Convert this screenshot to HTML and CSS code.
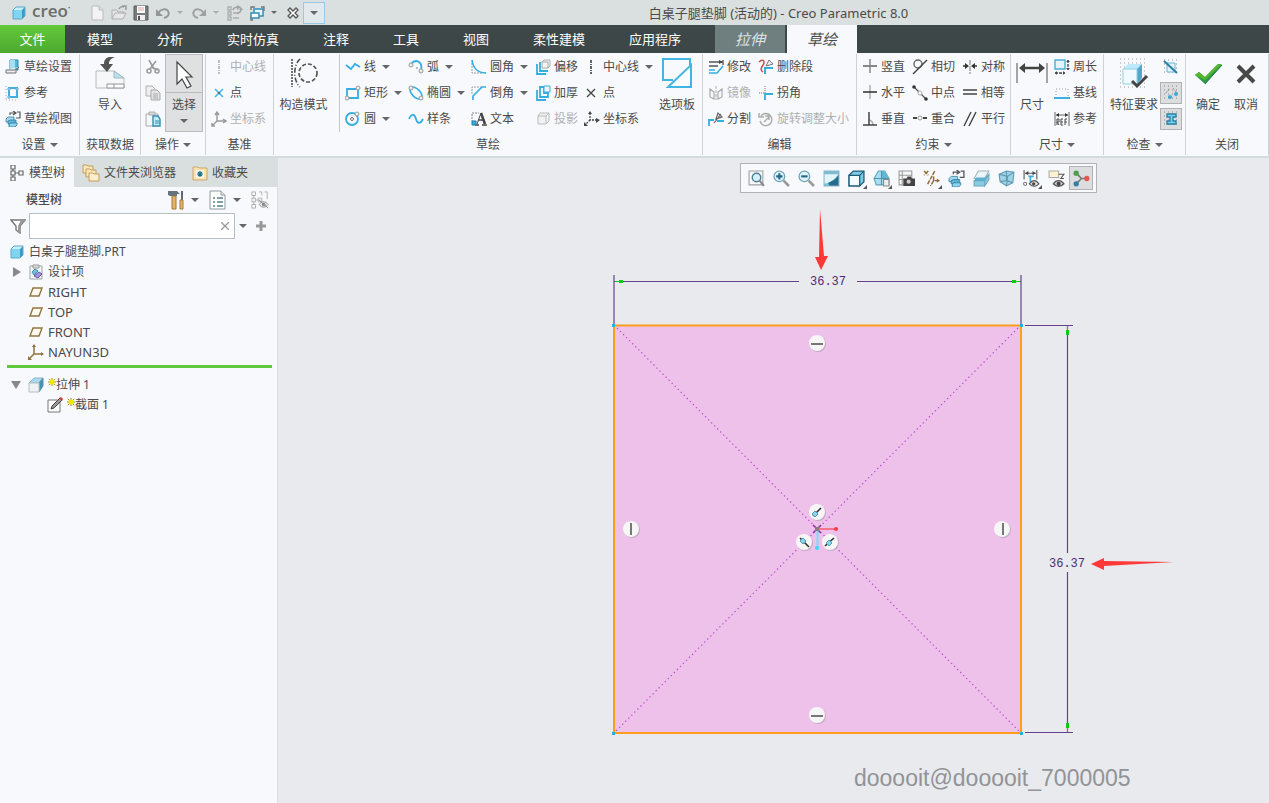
FILE: index.html
```
<!DOCTYPE html>
<html lang="zh-CN">
<head>
    <meta charset="UTF-8">
    <meta name="viewport" content="width=device-width, initial-scale=1.0">
    <title>白桌子腿垫脚 (活动的) - Creo Parametric 8.0</title>
    <link rel="stylesheet" href="styles.css">
</head>
<body>

    <!-- shared icons -->
    <svg class="sprite" aria-hidden="true">
        <symbol id="cube" viewBox="0 0 16 16">
            <path d="M2 5l3-3h9l-3 3z" fill="#c9eefb"/>
            <path d="M11 5l3-3v9l-3 3z" fill="#3a9cc4"/>
            <path d="M2 5h9v9H2z" fill="#80d4f2"/>
            <path d="M2 5l3-3h9v9l-3 3H2z" fill="none" stroke="#5aa9c8"/>
        </symbol>
        <symbol id="sketch-view" viewBox="0 0 16 16">
            <path d="M5 4V2h5M8 0l3 2-3 2M12 1h3v6h-4" fill="none" stroke="#555" stroke-width="1.2"/>
            <path d="M1 8l2-2h6v3l-2 2H1z" fill="#a5d8ec" stroke="#3487a8" stroke-width=".8"/>
            <path d="M3 10l2-1h6v3l-2 1H3z" fill="#5fb4d6" stroke="#2f7d9e" stroke-width=".8"/>
            <path d="M4 13l2-1h6v2l-2 2H4z" fill="#8fd3ec" stroke="#2f7d9e" stroke-width=".8"/>
        </symbol>
        <symbol id="spark" viewBox="0 0 10 10">
            <path d="M1 1l8 8M9 1L1 9M5 0v10M0 5h10" stroke="#77760c"/>
            <path d="M2 2h6v6H2z" fill="#f2e600"/>
        </symbol>
        <symbol id="plane" viewBox="0 0 16 16">
            <path d="M5 4h9l-3 8H2z" fill="#fdfaf2" stroke="#93733c" stroke-width="1.4"/>
        </symbol>
    </svg>

    <header class="titlebar">
        <div class="brand">
            <svg class="icon"><use href="#cube"/></svg>
            <span>creo<sup>•</sup></span>
        </div>
        <nav class="quick" aria-label="快速访问">
            <button aria-label="新建"><svg class="icon" viewBox="0 0 16 16"><path d="M3 1h7l4 4v10H3z" fill="#f3f3f3" stroke="#bbb"/><path d="M10 1v4h4" fill="#ddd" stroke="#bbb"/></svg></button>
            <button aria-label="打开"><svg class="icon" viewBox="0 0 16 16"><path d="M1 14V5h5l1 2h6v2M1 14l3-6h11l-3 6z" fill="#e6e7e7" stroke="#aeb1b1"/><path d="M8 4c1-2 3-3 5-2M11 1h4v4" fill="none" stroke="#999" stroke-width="1.5"/></svg></button>
            <button aria-label="保存"><svg class="icon" viewBox="0 0 16 16"><path d="M1 1h14v14H1z" fill="#777b7d" stroke="#595c5e"/><path d="M4 1h8v7H4z" fill="#fff"/><path d="M5 3h6M5 5h6" stroke="#d9a0a0"/><path d="M4 10h8v5H4z" fill="#eee"/><path d="M5 11h2v4H5z" fill="#555"/></svg></button>
            <button aria-label="撤消"><svg class="icon" viewBox="0 0 16 16"><path d="M3 8c3-4 8-5 10-2 2 3 0 6-4 7" fill="none" stroke="#929697" stroke-width="2"/><path d="M1 4v7h7z" fill="#929697"/></svg></button>
            <i class="caret dim"></i>
            <button aria-label="重做"><svg class="icon" viewBox="0 0 16 16"><path d="M13 8C10 4 5 3 3 6c-2 3 0 6 4 7" fill="none" stroke="#9da1a2" stroke-width="2"/><path d="M15 4v7H8z" fill="#9da1a2"/></svg></button>
            <i class="caret dim"></i>
            <button aria-label="重新生成"><svg class="icon" viewBox="0 0 16 16"><path d="M1 2h3v3H1zM1 7h3v3H1zM1 12h3v3H1zM6 8h6M6 13h6" fill="none" stroke="#aaaead" stroke-width="1.3"/><path d="M6 5c1-3 3-3 5-3M14 4c0 3-2 4-4 4" fill="none" stroke="#a0a4a3" stroke-width="1.6"/><path d="M10 0l4 2-4 3zM16 5h-4l2-3z" fill="#a0a4a3"/></svg></button>
            <button aria-label="窗口"><svg class="icon" viewBox="0 0 16 16"><path d="M2 5V2h4M12 2h3v4M4 15H2v-3" fill="none" stroke="#6c7475" stroke-width="1.3"/><path d="M5 4h9v7H5z" fill="#e9f7fc" stroke="#338eb3" stroke-width="1.5"/><path d="M2 8h8v5H2z" fill="#fff" stroke="#338eb3" stroke-width="1.5"/></svg></button>
            <i class="caret"></i>
            <button aria-label="关闭窗口"><svg class="icon" viewBox="0 0 16 16"><path d="M3 5l2-2 3 3 3-3 2 2-3 3 3 3-2 2-3-3-3 3-2-2 3-3z" fill="#fff" stroke="#555" stroke-width="1.3"/></svg></button>
            <button class="customize" aria-label="自定义"><i class="caret"></i></button>
        </nav>
        <h1>白桌子腿垫脚 (活动的) - Creo Parametric 8.0</h1>
    </header>

    <nav class="tabs">
        <button class="file">文件</button>
        <button>模型</button>
        <button>分析</button>
        <button>实时仿真</button>
        <button>注释</button>
        <button>工具</button>
        <button>视图</button>
        <button>柔性建模</button>
        <button>应用程序</button>
        <button class="context">拉伸</button>
        <button class="context active">草绘</button>
    </nav>

    <div class="ribbon">
        <section class="group">
            <div class="cmds setup">
                <button class="cmd"><svg class="icon" viewBox="0 0 16 16"><path d="M5 1h8v10H5z" fill="#55b8dd" stroke="#3383a3"/><path d="M5 1h5v9H5z" fill="#a4dff3"/><path d="M1 11h9l4-3M1 11v3h10V9" fill="#eee" stroke="#6c7273"/></svg>草绘设置</button>
                <button class="cmd"><svg class="icon" viewBox="0 0 16 16"><path d="M4 3h8v9H4z" fill="none" stroke="#42aedd" stroke-width="2"/><path d="M3 3h2v2H3zM11 3h2v2h-2zM3 11h2v2H3z" fill="#fff" stroke="#42aedd"/><path d="M1 1v14M1 15h12" stroke="#aaa" stroke-dasharray="1 2"/></svg>参考</button>
                <button class="cmd"><svg class="icon"><use href="#sketch-view"/></svg>草绘视图</button>
            </div>
            <button class="label">设置<i class="caret"></i></button>
        </section>

        <section class="group">
            <div class="cmds">
                <button class="big"><svg viewBox="0 0 32 32"><path d="M2 14h18l10 7v10H2z" fill="#f5f7f8" stroke="#b7bcbf"/><path d="M20 14v7h10z" fill="#bcdff0" stroke="#9ebac6"/><path d="M13 27h17v4H13zM20 27v4" fill="#fff" stroke="#8e9699"/><path d="M21 0c-8-1-11 2-11 7H6l7 8 6-8h-4c0-3 1-5 6-7z" fill="#555"/></svg>导入</button>
            </div>
            <div class="label">获取数据</div>
        </section>

        <section class="group">
            <div class="cmds ops">
                <button aria-label="剪切"><svg class="icon" viewBox="0 0 16 16"><path d="M4 1l5 9M11 2L5 10M6 8l7 3" stroke="#9a9a9a" stroke-width="1.6"/><circle cx="4" cy="12" r="2" fill="none" stroke="#9a9a9a" stroke-width="1.5"/><circle cx="12" cy="12" r="2" fill="none" stroke="#9a9a9a" stroke-width="1.5"/></svg></button>
                <button aria-label="复制"><svg class="icon" viewBox="0 0 16 16"><path d="M1 1h6l3 3v7H1z" fill="#eee" stroke="#b1b1b1"/><path d="M6 5h6l3 3v7H6z" fill="#e4e4e4" stroke="#a9a9a9"/><path d="M8 9h5M8 11h5M8 13h5" stroke="#aaa"/></svg></button>
                <button aria-label="粘贴"><svg class="icon" viewBox="0 0 16 16"><path d="M1 3h12v12H1z" fill="#f6f6f6" stroke="#aaa"/><path d="M4 1h6v3H4z" fill="#ddd" stroke="#aaa"/><path d="M8 5h5l2 3v7H8z" fill="#c3eaf8" stroke="#348eaf" stroke-width="1.4"/><path d="M10 10h4M10 12h4" stroke="#348eaf"/></svg></button>
                <button class="select"><svg viewBox="0 0 28 37"><path d="M7 7v22l5-5 5 9 4-2-5-9h6z" fill="#fff" stroke="#444" stroke-width="1.2"/></svg><span>选择</span><i class="caret"></i></button>
            </div>
            <button class="label">操作<i class="caret"></i></button>
        </section>

        <section class="group">
            <div class="cmds setup">
                <button class="cmd" disabled><svg class="icon" viewBox="0 0 16 16"><path d="M8 1v14" stroke="#aaa" stroke-width="1.5" stroke-dasharray="3 1 1 1"/></svg>中心线</button>
                <button class="cmd"><svg class="icon" viewBox="0 0 16 16"><path d="M4 4l8 8M12 4l-8 8" stroke="#43b5e3" stroke-width="1.6"/><circle cx="8" cy="8" r="1" fill="#555"/></svg>点</button>
                <button class="cmd" disabled><svg class="icon" viewBox="0 0 16 16"><path d="M6 2v8h8M6 10l-5 5M4 4l2-3 2 3M12 8l3 2-3 2M1 12v3h3" fill="none" stroke="#999" stroke-width="1.4"/></svg>坐标系</button>
            </div>
            <div class="label">基准</div>
        </section>

        <section class="group">
            <div class="cmds sketch">
                <button class="big construct"><svg viewBox="0 0 32 32"><path d="M4 2v28" stroke="#444" stroke-width="1.5" stroke-dasharray="2 1"/><path d="M12 2C5 8 5 24 12 30" fill="none" stroke="#444" stroke-width="1.5" stroke-dasharray="5 2 1 2"/><circle cx="20" cy="16" r="9" fill="none" stroke="#555" stroke-width="1.7" stroke-dasharray="4 2"/></svg>构造模式</button>
                <div class="cols">
                    <button class="cmd"><svg class="icon" viewBox="0 0 16 16"><path d="M1 6l5 4 4-5 5 3" fill="none" stroke="#35aee2" stroke-width="1.8"/></svg>线<i class="caret"></i></button>
                    <button class="cmd"><svg class="icon" viewBox="0 0 16 16"><path d="M2 4h11v9H2z" fill="none" stroke="#35aee2" stroke-width="1.8"/><circle cx="13" cy="3" r="2" fill="#eee" stroke="#999"/><circle cx="2" cy="13" r="2" fill="#eee" stroke="#999"/></svg>矩形<i class="caret"></i></button>
                    <button class="cmd"><svg class="icon" viewBox="0 0 16 16"><circle cx="7" cy="8" r="6" fill="none" stroke="#35aee2" stroke-width="1.8"/><circle cx="7" cy="8" r="1.5" fill="#eee" stroke="#777"/><circle cx="12" cy="3" r="2" fill="#eee" stroke="#999"/></svg>圆<i class="caret"></i></button>

                    <button class="cmd"><svg class="icon" viewBox="0 0 16 16"><path d="M3 5c5-6 12-2 10 6" fill="none" stroke="#35aee2" stroke-width="1.8"/><circle cx="3" cy="6" r="2" fill="#eee" stroke="#999"/><circle cx="13" cy="12" r="2" fill="#eee" stroke="#999"/><circle cx="9" cy="9" r="1" fill="#aaa"/></svg>弧<i class="caret"></i></button>
                    <button class="cmd"><svg class="icon" viewBox="0 0 16 16"><ellipse cx="8" cy="8" rx="7.5" ry="4" transform="rotate(45 8 8)" fill="none" stroke="#35aee2" stroke-width="1.6"/><circle cx="3" cy="3" r="2" fill="#eee" stroke="#999"/><circle cx="13" cy="13" r="2" fill="#eee" stroke="#999"/></svg>椭圆<i class="caret"></i></button>
                    <button class="cmd"><svg class="icon" viewBox="0 0 16 16"><path d="M1 8c3-7 6-4 7 0s4 6 7 0" fill="none" stroke="#35aee2" stroke-width="1.8"/></svg>样条</button>

                    <button class="cmd"><svg class="icon" viewBox="0 0 16 16"><path d="M1 4v10h10" fill="none" stroke="#999" stroke-dasharray="2 1"/><path d="M1 1c1 8 6 13 14 13" fill="none" stroke="#35aee2" stroke-width="1.7"/></svg>圆角<i class="caret"></i></button>
                    <button class="cmd"><svg class="icon" viewBox="0 0 16 16"><path d="M1 9V2h10" fill="none" stroke="#999" stroke-dasharray="2 1"/><path d="M2 15v-4l9-9h4" fill="none" stroke="#35aee2" stroke-width="1.7"/></svg>倒角<i class="caret"></i></button>
                    <button class="cmd"><svg class="icon" viewBox="0 0 16 16"><path d="M1 3v7M1 2h7" stroke="#888" stroke-dasharray="2 1"/><path d="M6 13l4-11" stroke="#444"/><path d="M10 2l4 11" stroke="#444" stroke-width="2.5"/><path d="M7 9h5M4 14h4M11 14h5" stroke="#444" stroke-width="1.3"/><path d="M1 10h4v4H1z" fill="#35aee2" stroke="#277ca0"/></svg>文本</button>

                    <button class="cmd"><svg class="icon" viewBox="0 0 16 16"><path d="M2 5v10h9" fill="none" stroke="#35aee2" stroke-width="1.8"/><path d="M5 3v9h8" fill="none" stroke="#35aee2" stroke-width="1.8"/><path d="M7 3h6v6H7zM7 3l2-2h6v6l-2 2" fill="#f5f5f5" stroke="#aaa"/></svg>偏移</button>
                    <button class="cmd"><svg class="icon" viewBox="0 0 16 16"><path d="M2 5v10h9" fill="none" stroke="#35aee2" stroke-width="1.8"/><path d="M9 2H5v10h8V8H9z" fill="none" stroke="#35aee2" stroke-width="1.8"/><path d="M9 1h6v6H9z" fill="#f5f5f5" stroke="#35aee2"/></svg>加厚</button>
                    <button class="cmd" disabled><svg class="icon" viewBox="0 0 16 16"><path d="M3 5h8v8H3zM3 5l2-3h9l-3 3M14 2v8l-3 3" fill="#f2f2f2" stroke="#bbb"/></svg>投影</button>

                    <button class="cmd"><svg class="icon" viewBox="0 0 16 16"><path d="M7 1v14" stroke="#333" stroke-width="1.5" stroke-dasharray="3 1 1 1"/></svg>中心线<i class="caret"></i></button>
                    <button class="cmd"><svg class="icon" viewBox="0 0 16 16"><path d="M3 4l8 8M11 4l-8 8" stroke="#444" stroke-width="1.3"/></svg>点</button>
                    <button class="cmd"><svg class="icon" viewBox="0 0 16 16"><path d="M6 2v7h8M6 9l-5 5" fill="none" stroke="#444" stroke-width="1.3" stroke-dasharray="2 1"/><path d="M4 3l2-3 2 3zM12 7l4 2-4 3zM0 11v4h4z" fill="#444"/></svg>坐标系</button>
                </div>
                <button class="big palette"><svg viewBox="0 0 32 32"><path d="M12 23H2V2h27v6" fill="none" stroke="#43b5e3" stroke-width="2"/><path d="M7 30h23V8z" fill="#fafcfd" stroke="#43b5e3" stroke-width="2"/></svg>选项板</button>
            </div>
            <div class="label">草绘</div>
        </section>

        <section class="group">
            <div class="cmds cols pairs">
                <button class="cmd"><svg class="icon" viewBox="0 0 16 16"><path d="M1 3h14M1 7h9M15 1v5" stroke="#555" stroke-width="1.3"/><path d="M11 1l4 2-4 2z" fill="#444"/><path d="M1 11h6M1 14h8l6-7" fill="none" stroke="#35aee2" stroke-width="1.6"/></svg>修改</button>
                <button class="cmd" disabled><svg class="icon" viewBox="0 0 16 16"><path d="M8 1v14" stroke="#aaa" stroke-dasharray="3 1"/><path d="M2 4l4 3v7l-4-2zM14 4l-4 3v7l4-2z" fill="none" stroke="#aaa" stroke-width="1.2"/></svg>镜像</button>
                <button class="cmd"><svg class="icon" viewBox="0 0 16 16"><path d="M1 15V9h5M9 10h7" fill="none" stroke="#35aee2" stroke-width="1.8"/><path d="M6 12l7-9M8 8l2-6 4 4z" fill="#eee" stroke="#666" stroke-width="1.2"/></svg>分割</button>
                <button class="cmd"><svg class="icon" viewBox="0 0 16 16"><path d="M1 3c5-4 6 0 4 3s-3 5 0 7" fill="none" stroke="#c95050" stroke-width="1.5"/><path d="M7 15V9h8" fill="none" stroke="#35aee2" stroke-width="2"/><path d="M8 7l3-6 4 4z" fill="#eee" stroke="#777"/></svg>删除段</button>
                <button class="cmd"><svg class="icon" viewBox="0 0 16 16"><path d="M7 1v7H1" fill="none" stroke="#999" stroke-dasharray="1 1" stroke-width="1.3"/><path d="M7 15V9h8" fill="none" stroke="#35aee2" stroke-width="1.8"/></svg>拐角</button>
                <button class="cmd" disabled><svg class="icon" viewBox="0 0 16 16"><path d="M3 5a6 6 0 1 1-1 5M1 2v4h5M6 11l5-5M7 5h4v4" fill="none" stroke="#aaa" stroke-width="1.4"/></svg>旋转调整大小</button>
            </div>
            <div class="label">编辑</div>
        </section>

        <section class="group">
            <div class="cmds cols pairs">
                <button class="cmd"><svg class="icon" viewBox="0 0 16 16"><path d="M1 7h14" stroke="#555" stroke-width="1.4"/><path d="M8 0v14" stroke="#888" stroke-width="1.5"/></svg>竖直</button>
                <button class="cmd"><svg class="icon" viewBox="0 0 16 16"><path d="M8 0v14" stroke="#aaa" stroke-width="1.4"/><path d="M1 7h14" stroke="#444" stroke-width="1.7"/></svg>水平</button>
                <button class="cmd"><svg class="icon" viewBox="0 0 16 16"><path d="M7 9a5 5 0 0 1 4 5" fill="none" stroke="#aaa" stroke-width="1.3"/><path d="M7 1v13M1 14h14" stroke="#444" stroke-width="1.5"/></svg>垂直</button>
                <button class="cmd"><svg class="icon" viewBox="0 0 16 16"><circle cx="6" cy="5" r="4" fill="none" stroke="#666" stroke-width="1.4"/><path d="M1 15L15 1" stroke="#444" stroke-width="1.5"/></svg>相切</button>
                <button class="cmd"><svg class="icon" viewBox="0 0 16 16"><path d="M2 2l12 12" stroke="#555" stroke-width="1.3"/><circle cx="2" cy="2" r="1.8" fill="#333"/><circle cx="14" cy="14" r="1.8" fill="#333"/><circle cx="8" cy="8" r="2" fill="#fff" stroke="#aaa"/></svg>中点</button>
                <button class="cmd"><svg class="icon" viewBox="0 0 16 16"><path d="M1 7h4M11 7h4" stroke="#444" stroke-width="1.8"/><circle cx="8" cy="7" r="2" fill="#fff" stroke="#999"/></svg>重合</button>
                <button class="cmd"><svg class="icon" viewBox="0 0 16 16"><path d="M8 1v14" stroke="#777" stroke-dasharray="5 1"/><path d="M1 7h3M12 7h3" stroke="#333" stroke-width="1.5"/><path d="M3 4l4 3-4 3zM13 4L9 7l4 3z" fill="#333"/></svg>对称</button>
                <button class="cmd"><svg class="icon" viewBox="0 0 16 16"><path d="M1 5h14M1 9h14" stroke="#444" stroke-width="1.5"/></svg>相等</button>
                <button class="cmd"><svg class="icon" viewBox="0 0 16 16"><path d="M2 15L9 1M7 15l7-14" stroke="#444" stroke-width="1.4"/></svg>平行</button>
            </div>
            <button class="label">约束<i class="caret"></i></button>
        </section>

        <section class="group">
            <div class="cmds dims">
                <button class="big"><svg viewBox="0 0 32 32"><path d="M1 6v20M31 6v20" stroke="#777" stroke-width="1.3"/><path d="M6 11h20" stroke="#444" stroke-width="2.5"/><path d="M3 11l6-5v10zM29 11l-6-5v10z" fill="#444"/></svg>尺寸</button>
                <div class="cols">
                    <button class="cmd"><svg class="icon" viewBox="0 0 16 16"><path d="M1 1h10v9H1z" fill="#e5f5fb" stroke="#4aaed5" stroke-width="1.4"/><path d="M14 1v10M1 14h10" stroke="#444" stroke-width="1.3" stroke-dasharray="3 1"/><path d="M12 3l2-2 2 2zM12 9l2 2 2-2zM3 12l-2 2 2 2zM9 12l2 2-2 2z" fill="#444"/></svg>周长</button>
                    <button class="cmd"><svg class="icon" viewBox="0 0 16 16"><path d="M2 13V4h12v9" fill="none" stroke="#999" stroke-dasharray="1 2"/><path d="M0 13h16" stroke="#3ab1e0" stroke-width="2"/></svg>基线</button>
                    <button class="cmd"><svg class="icon" viewBox="0 0 16 16"><path d="M1 1v14M15 1v14M2 4h12" stroke="#666"/><path d="M2 4l3-2v4zM14 4l-3-2v4z" fill="#333"/><path d="M3 14V8h2v3H3l2 3M9 8H7v6h2M7 11h2M13 8h-2v6M11 11h2" fill="none" stroke="#444"/></svg>参考</button>
                </div>
            </div>
            <button class="label">尺寸<i class="caret"></i></button>
        </section>

        <section class="group">
            <div class="cmds check">
                <button class="big"><svg viewBox="0 0 32 32"><path d="M2 2h28M2 6h28M2 10h28M2 14h28M2 18h28M2 22h28M2 26h28M2 30h28" stroke="#999" stroke-dasharray="1 3"/><path d="M5 12l5-5h14l-5 5z" fill="#bdeaf8"/><path d="M19 12l5-5v14l-5 6z" fill="#4ea9c9"/><path d="M5 12h14v15H5z" fill="#f1fbff" stroke="#93cde2"/><path d="M14 24l5 5L29 19" fill="none" stroke="#444" stroke-width="3"/></svg>特征要求</button>
                <div class="toggles">
                    <button aria-label="重叠几何"><svg class="icon" viewBox="0 0 16 16"><path d="M1 1h15M1 5h15M1 9h15M1 13h15" stroke="#888" stroke-dasharray="1 3"/><path d="M4 4h8v9H4z" fill="#e3f4fb" stroke="#65b6d7"/><path d="M1 2l13 12" stroke="#277fa6" stroke-width="2"/></svg></button>
                    <button class="on" aria-label="突出显示开放端"><svg class="icon" viewBox="0 0 16 16"><path d="M1 1h15M1 5h15M1 9h15M1 13h15" stroke="#888" stroke-dasharray="1 3"/><path d="M3 8l4-5M10 3l4 5" stroke="#777" stroke-dasharray="1 1"/><circle cx="7" cy="12" r="2" fill="#3ca8d5"/><circle cx="13" cy="9" r="2" fill="#3ca8d5"/></svg></button>
                    <button class="on" aria-label="着色封闭环"><svg class="icon" viewBox="0 0 16 16"><path d="M1 1h15M1 5h15M1 9h15M1 13h15" stroke="#888" stroke-dasharray="1 3"/><path d="M4 3h9v3h-3v4h3v3H4v-3h3V6H4z" fill="#7bd1f0" stroke="#277fa6" stroke-width="1.3"/></svg></button>
                </div>
            </div>
            <button class="label">检查<i class="caret"></i></button>
        </section>

        <section class="group">
            <div class="cmds close">
                <button class="big"><svg viewBox="0 0 32 32"><path d="M3 18l4-3 6 5L26 7l4 1-17 19z" fill="#2f9a48"/><path d="M3 18l4-3 6 5L26 7h4L13 23z" fill="#53b82d"/><path d="M13 27l17-19" stroke="#247444"/></svg>确定</button>
                <button class="big"><svg viewBox="0 0 32 32"><path d="M8 9l16 16M24 9L8 25" stroke="#484848" stroke-width="4"/></svg>取消</button>
            </div>
            <div class="label">关闭</div>
        </section>
    </div>

    <main class="workspace">
        <aside class="navigator">
            <nav class="nav-tabs">
                <button class="active"><svg class="icon" viewBox="0 0 16 16"><path d="M2 0h4v4H2zM2 6h4v4H2zM2 12h4v4H2zM10 6h4v4h-4zM4 4v2M4 10v2M6 8h4" fill="none" stroke="#666" stroke-width="1.2"/></svg>模型树</button>
                <button><svg class="icon folders" viewBox="0 0 18 18"><path d="M1 1h4l1 1h5v7H1z" fill="#fbe7bb" stroke="#c59c5c"/><path d="M4 5h4l1 1h5v7H4z" fill="#fbe7bb" stroke="#c59c5c"/><path d="M7 9h4l1 1h5v7H7z" fill="#fdeecb" stroke="#c59c5c"/></svg>文件夹浏览器</button>
                <button><svg class="icon" viewBox="0 0 16 16"><path d="M1 2h5l1 1h8v12H1z" fill="#fbe3b0" stroke="#c9a769"/><path d="M4 5h8v8H4z" fill="#fdf6e4"/><path d="M8 6v6M5 9h6M6 7l4 4M10 7l-4 4" stroke="#20708f" stroke-width="1.2"/></svg>收藏夹</button>
            </nav>
            <div class="tree-head">
                <h2>模型树</h2>
                <button aria-label="设置"><svg class="icon tool" viewBox="0 0 18 20"><path d="M1 1h9l3 3h-3v2H3L1 5z" fill="#66757d"/><path d="M5 6h4v13H5z" fill="#e4b568" stroke="#a47a3a"/><path d="M15 1v9" stroke="#667" stroke-width="2"/><path d="M13 10h3v9h-3z" fill="#e4b568" stroke="#a47a3a"/></svg><i class="caret"></i></button>
                <button aria-label="显示"><svg class="icon tool" viewBox="0 0 18 20"><path d="M1 1h11l4 4v14H1z" fill="#fff" stroke="#8d9a9e"/><path d="M12 1v4h4" fill="#dde6e9" stroke="#8d9a9e"/><path d="M4 8h2M4 12h2M4 16h2M8 8h6M8 12h6M8 16h6" stroke="#59818f" stroke-width="1.4"/></svg><i class="caret"></i></button>
                <button aria-label="隐藏项"><svg class="icon tool" viewBox="0 0 20 20"><path d="M1 1h4v4H1zM1 8h4v4H1zM1 15h4v4H1zM8 8h4v4H8zM3 5v3M3 12v3M5 10h3M9 1h3v4M15 1h3v8" fill="none" stroke="#aaa"/><path d="M9 15c3-4 7-4 10 0-3 4-7 4-10 0z" fill="#eee" stroke="#888"/><circle cx="14" cy="15" r="2" fill="#888"/><path d="M9 10l10 9" stroke="#888"/></svg></button>
            </div>
            <div class="filter">
                <svg class="icon" viewBox="0 0 16 16"><path d="M1 2h14l-5 6v7l-4-3V8z" fill="#fff" stroke="#777" stroke-width="1.4"/><path d="M10 8l5-6h-4L8 8v6l2 1z" fill="#999"/></svg>
                <div class="search">
                    <input type="text" aria-label="过滤模型树">
                    <button aria-label="清除"><svg viewBox="0 0 8 8"><path d="M0 0l8 8M8 0L0 8" stroke="#999" stroke-width="1.3"/></svg></button>
                </div>
                <button aria-label="过滤选项"><i class="caret"></i></button>
                <button aria-label="添加"><svg class="plus" viewBox="0 0 12 12"><path d="M6 1v10M1 6h10" stroke="#999" stroke-width="3"/></svg></button>
            </div>
            <ul class="tree">
                <li><svg class="icon"><use href="#cube"/></svg>白桌子腿垫脚.PRT</li>
                <li class="level1"><i class="arrow"></i><svg class="icon" viewBox="0 0 16 16"><path d="M2 2h12v13H2z" fill="#f2f5f6" stroke="#99a5aa"/><path d="M5 1h6v3H5z" fill="#ddd" stroke="#999"/><path d="M4 8l3-3 3 2-4 4z" fill="#76c3de" stroke="#398caa"/><path d="M6 12l5-4 3 2-4 4z" fill="#a894da" stroke="#6a55aa"/></svg>设计项</li>
                <li class="level1 datum"><svg class="icon"><use href="#plane"/></svg>RIGHT</li>
                <li class="level1 datum"><svg class="icon"><use href="#plane"/></svg>TOP</li>
                <li class="level1 datum"><svg class="icon"><use href="#plane"/></svg>FRONT</li>
                <li class="level1 datum"><svg class="icon" viewBox="0 0 16 16"><path d="M6 1v9h9M6 10l-5 5" fill="none" stroke="#93733c" stroke-width="1.5"/><path d="M4 3l2-3 2 3zM13 8l3 2-3 2zM0 12v4h4z" fill="#93733c"/></svg>NAYUN3D</li>
            </ul>
            <hr class="insert-line">
            <ul class="tree features">
                <li class="level1"><i class="arrow open"></i><svg class="icon" viewBox="0 0 16 16"><path d="M1 6l5-5h9l-4 5z" fill="#a9dcef" stroke="#8cb6c5"/><path d="M11 6l4-5v8l-4 6z" fill="#4394b4" stroke="#5f94a8"/><path d="M1 6h10v9H1z" fill="#f0f2f3" stroke="#b4c0c5"/></svg><svg class="spark"><use href="#spark"/></svg>拉伸 1</li>
                <li class="level2"><svg class="icon" viewBox="0 0 16 16"><path d="M1 3h12v12H1z" fill="#fff" stroke="#777"/><path d="M4 12l1-3 8-8 2 2-8 8z" fill="#999" stroke="#444"/><path d="M12 1l2-1 2 2-1 2z" fill="#cc3b3b"/></svg><svg class="spark"><use href="#spark"/></svg>截面 1</li>
            </ul>
        </aside>

        <div class="canvas">
            <svg class="drawing" viewBox="278 158 991 645" preserveAspectRatio="xMinYMin meet">
                <defs>
                    <g id="badge">
                        <circle cx="1" cy="1" r="8" fill="#a99bab" opacity=".6"/>
                        <circle r="8" fill="#f6f6f6"/>
                    </g>
                </defs>
                <!-- section -->
                <path d="M614 325.500H1021V733H614z" fill="#eec1ea" stroke="#ff9d1c" stroke-width="2"/>
                <path d="M614 325L1021 733M1021 325L614 733" stroke="#bd4fd0" stroke-width="1.3" stroke-dasharray="1.300 3"/>

                <!-- dimensions -->
                <path d="M614 275v49M1021 275v49M614 281.500h185M857 281.500h164" stroke="#65438b" stroke-width="1.2"/>
                <path d="M1025 325.500h48M1025 732.500h48M1067.500 326v227M1067.500 572v160" stroke="#65438b" stroke-width="1.2"/>
                <path d="M615 281h4v-1h4v3h-4v-1h-4zM1020 281h-4v-1h-4v3h4v-1h4zM1067 326v4h-1v5h3v-5h-1v-4zM1067 732v-4h-1v-5h3v5h-1v4z" fill="#10c818"/>
                <text class="dim-text" x="828" y="285">36.37</text>
                <text class="dim-text" x="1067" y="567">36.37</text>

                <!-- corner vertices -->
                <path d="M612 324h3v3h-3zM1020 324h3v3h-3zM612 732h3v3h-3zM1020 732h3v3h-3z" fill="#20b4d8"/>

                <!-- constraint badges -->
                <g transform="translate(817 343)"><use href="#badge"/><path d="M-6 1H6" stroke="#777" stroke-width="2"/></g>
                <g transform="translate(817 715)"><use href="#badge"/><path d="M-6 1H6" stroke="#777" stroke-width="2"/></g>
                <g transform="translate(631 529)"><use href="#badge"/><path d="M0 -6V6" stroke="#777" stroke-width="2"/></g>
                <g transform="translate(1002 529)"><use href="#badge"/><path d="M1 -6V6" stroke="#777" stroke-width="2"/></g>
                <g transform="translate(817 512)"><use href="#badge"/><path d="M-4 4L4 -4" stroke="#333" stroke-width="1.600"/><path d="M-5 2l3-3 3 3-3 3z" fill="#8cd3ec" stroke="#529bb5"/></g>
                <g transform="translate(804 542)"><use href="#badge"/><path d="M-4 -4L5 5" stroke="#333" stroke-width="1.600"/><path d="M-4 -1l3-3 3 3-3 3z" fill="#8cd3ec" stroke="#529bb5"/></g>
                <g transform="translate(830 542)"><use href="#badge"/><path d="M-5 4L4 -4" stroke="#333" stroke-width="1.600"/><path d="M-4 1l3-3 3 3-3 3z" fill="#8cd3ec" stroke="#529bb5"/></g>

                <!-- origin -->
                <path d="M817 529h19" stroke="#f55b6b" stroke-width="1.500"/><circle cx="836" cy="529" r="2" fill="#f53a45"/>
                <path d="M817.500 529v19" stroke="#77dff5" stroke-width="2"/><circle cx="817" cy="548" r="2" fill="#3fd9f3"/>
                <path d="M813 525l8 8M821 525l-8 8" stroke="#9531a6" stroke-width="1.500"/><path d="M815 527h4v4h-4z" fill="#857c80"/>

                <!-- callout arrows -->
                <path d="M820 209l4 47h4l-7 14-6-13h4z" fill="#ff3838"/>
                <path d="M1174 562l-70 4v4l-13-6 13-6v3z" fill="#ff3838"/>
                <text class="watermark" x="854" y="786">dooooit@dooooit_7000005</text>
            </svg>

            <div class="view-bar" role="toolbar">
                <button aria-label="重新调整"><svg class="icon" viewBox="0 0 16 16"><path d="M1 1h13v13H1z" fill="#f8f8f8" stroke="#9aa0a2"/><circle cx="8" cy="7" r="4" fill="#d6f0f9" stroke="#4a7d93" stroke-width="1.3"/><path d="M11 10l4 5" stroke="#888" stroke-width="2"/></svg></button>
                <button aria-label="放大"><svg class="icon" viewBox="0 0 16 16"><circle cx="6" cy="6" r="5" fill="#e0f3fa" stroke="#6fa3b8" stroke-width="1.2"/><path d="M3 6h6M6 3v6" stroke="#23678b" stroke-width="2"/><path d="M10 10l5 5" stroke="#999" stroke-width="2.500"/></svg></button>
                <button aria-label="缩小"><svg class="icon" viewBox="0 0 16 16"><circle cx="6" cy="6" r="5" fill="#e0f3fa" stroke="#6fa3b8" stroke-width="1.2"/><path d="M3 6h6" stroke="#23678b" stroke-width="2"/><path d="M10 10l5 5" stroke="#999" stroke-width="2.500"/></svg></button>
                <button aria-label="重画"><svg class="icon" viewBox="0 0 16 16"><path d="M1 1h14v14H1z" fill="#e3f4fa"/><path d="M1 1h14v3H1z" fill="#7bbcd4"/><path d="M1 15v-2c6-1 10-4 14-10v12z" fill="#75c5e2"/><path d="M6 15h9V4C13 8 10 10 5 12z" fill="#256b8c"/><path d="M1 1h14v14H1z" fill="none" stroke="#8db4c3"/></svg></button>
                <button aria-label="显示样式" class="more"><svg class="icon" viewBox="0 0 16 16"><path d="M1 5l4-4h10v10l-4 4H1z" fill="#7fcbe7" stroke="#1f5c79" stroke-width="1.2"/><path d="M1 5h10v10H1z" fill="#f2fbff" stroke="#1f5c79" stroke-width="1.2"/><path d="M11 5l4-4" stroke="#1f5c79"/></svg></button>
                <button aria-label="已保存方向" class="more"><svg class="icon" viewBox="0 0 16 16"><path d="M1 8l4-7h6l4 7v6H3z" fill="#a8def1" stroke="#5da4bf"/><path d="M8 1h3l4 7H8z" fill="#63b7d6"/><path d="M1 8h14M8 1v13" stroke="#4d94af"/><path d="M10 9h5v6h-5z" fill="#eee" stroke="#888"/></svg></button>
                <button aria-label="视图管理器"><svg class="icon" viewBox="0 0 16 16"><path d="M1 1h12v13H1zM1 5h12M1 9h12M4 1v13" fill="#f8f8f8" stroke="#999"/><path d="M5 8h3l1-2h3l1 2h3v7H5z" fill="#444"/><circle cx="10" cy="11" r="2" fill="#ccc"/></svg></button>
                <button aria-label="基准显示" class="more"><svg class="icon" viewBox="0 0 16 16"><path d="M1 1l4 4M5 1L1 5M11 1L4 14M10 6v4h5M10 10l-3 5" fill="none" stroke="#8c6c31" stroke-width="1.4" stroke-dasharray="4 1"/><path d="M13 8l3 2-3 2z" fill="#8c6c31"/></svg></button>
                <button aria-label="草绘视图"><svg class="icon"><use href="#sketch-view"/></svg></button>
                <button aria-label="修剪模型"><svg class="icon" viewBox="0 0 16 16"><path d="M1 8l4-7h10l-4 7z" fill="#edf4f7" stroke="#9fb4bc"/><path d="M1 10h10v5H1zM11 10l4-6v5l-4 6z" fill="#8acce5" stroke="#6ba7bd"/><path d="M1 10l2-3h8l4-4-4 7z" fill="#5fb0ce"/></svg></button>
                <button aria-label="透视图"><svg class="icon" viewBox="0 0 16 16"><path d="M1 4l7-3 7 1-1 10-6 3-6-4z" fill="#9bd3e8" stroke="#6099af"/><path d="M1 4l8 2 6-4M9 6l-1 9M8 1v9l-6 1M8 10l6 2" fill="none" stroke="#6099af"/></svg></button>
                <button aria-label="草绘器显示" class="more"><svg class="icon" viewBox="0 0 16 16"><path d="M1 0v9M13 0v9M2 3h10" stroke="#555"/><path d="M2 3l3-2v4zM12 3L9 1v4z" fill="#444"/><path d="M5 6h5M7 6v6" stroke="#3baad7" stroke-width="1.500"/><path d="M6 13c3-4 6-4 9 0-3 3-6 3-9 0z" fill="#ddd" stroke="#555"/><circle cx="10" cy="13" r="1.500" fill="#444"/><circle cx="2" cy="13" r="1.500" fill="#fff" stroke="#777"/></svg></button>
                <button aria-label="注释显示"><svg class="icon" viewBox="0 0 16 16"><path d="M1 1h9v6H1z" fill="#fff3cf" stroke="#aaa"/><path d="M10 4h5l-3 4h3" fill="none" stroke="#555"/><path d="M5 13c3-4 7-4 10 0-3 3-7 3-10 0z" fill="#ddd" stroke="#555" stroke-width="1.300"/><circle cx="10" cy="13" r="2" fill="#444"/></svg></button>
                <button aria-label="旋转中心" class="on"><svg class="icon" viewBox="0 0 16 16"><path d="M3 3l5 5h6M8 8l-5 5" fill="none" stroke="#777" stroke-width="1.500"/><circle cx="3" cy="3" r="2.500" fill="#4aa04c"/><circle cx="13" cy="8" r="2.500" fill="#e05a50"/><circle cx="3" cy="13" r="2.500" fill="#337fa2"/></svg></button>
            </div>
        </div>
    </main>

</body>
</html>
```
FILE: styles.css
```
* {
    box-sizing: border-box;
}
body {
    margin: 0;
    min-height: 100vh;
    display: flex;
    flex-direction: column;
    font-family: "Noto Sans", "Noto Sans CJK SC", sans-serif;
    font-size: 12px;
    line-height: 16px;
    color: #4a4a4a;
    background-color: #e8eaee;
}
button {
    display: flex;
    align-items: center;
    justify-content: center;
    padding: 0;
    border: none;
    background: none;
    font: inherit;
    color: inherit;
    white-space: nowrap;
    cursor: pointer;
}
button:disabled {
    color: #b0b0b0;
    cursor: default;
}
svg {
    display: block;
    flex-shrink: 0;
}
.sprite {
    position: absolute;
    width: 0;
    height: 0;
}
.icon {
    width: 16px;
    height: 16px;
}
.caret {
    border: 4px solid transparent;
    border-top-color: #666;
    border-bottom: none;
}
.caret.dim {
    border-top-color: #a8acac;
}

/* title bar */
.titlebar {
    display: grid;
    grid-template-columns: 1fr auto 1fr;
    align-items: center;
    height: 25px;
    background-color: #dae0df;
}
.titlebar h1 {
    margin: 0;
    grid-column: 2;
    grid-row: 1;
    padding-left: 288px;
    font-size: 13px;
    font-weight: normal;
}
.brand {
    grid-column: 1;
    grid-row: 1;
    display: flex;
    align-items: center;
    gap: 5px;
    padding-left: 11px;
    font-family: "Open Sans", sans-serif;
    font-size: 17px;
    font-weight: 600;
    color: #6c6c6c;
}
.brand span {
    padding-bottom: 3px;
}
.brand sup {
    font-size: 6px;
    line-height: 6px;
}
.quick {
    grid-column: 1 / 3;
    grid-row: 1;
    justify-self: start;
    display: flex;
    align-items: center;
    gap: 6px;
    margin-left: 89px;
}
.quick .caret {
    margin-right: 2px;
    border-width: 3px;
    border-bottom: none;
}
.customize {
    width: 22px;
    height: 22px;
    margin-left: -4px;
    border: 1px solid #9ac8e2;
    background-color: #e1e9ec;
}
.customize .caret {
    margin: 0;
    border-width: 4px;
    border-bottom: none;
}

/* ribbon tabs */
.tabs {
    display: flex;
    height: 28px;
    background-color: #3e4748;
    font-size: 13px;
    color: #fff;
}
.tabs button {
    min-width: 70px;
    padding: 0 22px;
}
.tabs .file {
    min-width: 65px;
    padding: 0;
    background: linear-gradient(#64c93c, #4ca92e);
}
.tabs .context {
    padding: 0;
    margin-left: 12px;
    background-color: #6f7f80;
    font-size: 15px;
    font-style: italic;
    color: #dde4e4;
}
.tabs .active {
    margin-left: 2px;
    background-color: #f8f9fc;
    color: #4a4a4a;
}

/* ribbon */
.ribbon {
    display: grid;
    grid-template-columns: 80px 61px 65px 68px 1fr 154px 154px 93px 82px 83px;
    height: 105px;
    background-color: #f8f9fc;
    border-bottom: 2px solid #d4dbdc;
}
.group {
    display: flex;
    flex-direction: column;
    margin: 1px 0;
    border-right: 1px solid #cdd2d4;
}
.group .label {
    display: flex;
    justify-content: center;
    align-items: center;
    gap: 4px;
    height: 23px;
    padding-top: 2px;
}
.cmds {
    display: flex;
    height: 78px;
}
.cmd {
    justify-content: flex-start;
    gap: 3px;
    height: 26px;
}
.cmd .caret {
    margin-left: 3px;
}
.setup {
    flex-direction: column;
    padding-left: 5px;
}
.big {
    flex-direction: column;
    justify-content: flex-start;
    flex: 1;
    gap: 8px;
    padding-top: 3px;
}
.big svg {
    width: 32px;
    height: 32px;
}
.ops {
    display: grid;
    grid-template-columns: 24px 38px;
    grid-template-rows: repeat(3, 26px);
}
.ops .select {
    grid-column: 2;
    grid-row: 1 / 4;
    flex-direction: column;
    justify-content: flex-start;
    background-color: #dfe0e2;
    border: 1px solid #b9bcbd;
}
.select svg {
    width: 28px;
    height: 37px;
}
.select span {
    align-self: stretch;
    padding-top: 4px;
    border-top: 1px solid #b9bcbd;
}
.select .caret {
    margin-top: 6px;
}
.cols {
    display: grid;
    grid-template-rows: repeat(3, 26px);
    grid-auto-flow: column;
    justify-content: start;
}
.sketch .construct {
    flex: 0 0 65px;
    padding-right: 6px;
}
.sketch .cols {
    grid-template-columns: 63px 63px 64px 49px 74px;
    padding-left: 5px;
    border-left: 1px solid #c3c9cb;
}
.sketch .palette {
    flex: 0 0 38px;
}
.pairs {
    grid-auto-columns: 50px;
    padding-left: 5px;
}
.dims {
    padding-left: 5px;
}
.dims .big {
    flex: 0 0 32px;
}
.dims .cols {
    margin-left: 6px;
}
.check {
    padding-left: 4px;
}
.toggles {
    display: grid;
    grid-template-rows: repeat(3, 26px);
    align-items: center;
    width: 25px;
}
.toggles button {
    width: 22px;
    height: 22px;
    border: 1px solid transparent;
}
.toggles .on,
.view-bar .on {
    background-color: #dcddde;
    border: 1px solid #b0b3b4;
}
.close {
    padding: 0 3px;
}

/* navigator */
.workspace {
    display: flex;
    flex: 1;
}
.navigator {
    width: 278px;
    flex-shrink: 0;
    background-color: #f8f9fc;
    border-right: 1px solid #d9dfde;
}
.nav-tabs {
    display: flex;
    height: 29px;
    background-color: #d9dfde;
}
.nav-tabs button {
    gap: 4px;
    padding: 0 8px;
}
.nav-tabs .active {
    padding: 0 9px;
    background-color: #f8f9fc;
}
.nav-tabs .folders {
    width: 18px;
    height: 18px;
}
.tree-head {
    display: flex;
    align-items: center;
    gap: 10px;
    height: 26px;
    padding: 0 8px 0 26px;
}
.tree-head h2 {
    flex: 1;
    margin: 0;
    font-size: 12px;
    font-weight: 500;
}
.tree-head button {
    gap: 6px;
}
.tool {
    width: 18px;
    height: 20px;
}
.filter {
    display: flex;
    align-items: center;
    gap: 4px;
    padding: 0 10px;
    height: 26px;
}
.filter > button + button {
    margin-left: 4px;
}
.search {
    display: flex;
    flex: 1;
    height: 26px;
    margin-left: -1px;
    border: 1px solid #b5bfc1;
    background-color: #fff;
}
.search input {
    flex: 1;
    min-width: 0;
    border: none;
    background: none;
    font: inherit;
}
.search button {
    width: 18px;
}
.search svg {
    width: 8px;
    height: 8px;
}
.plus {
    width: 12px;
    height: 12px;
}
.tree {
    margin: 0;
    padding: 3px 9px 0;
    list-style: none;
}
.tree li {
    display: flex;
    align-items: center;
    gap: 4px;
    height: 20px;
}
.tree .datum {
    font-size: 13px;
}
.tree .level1 {
    padding-left: 19px;
}
.tree .level2 {
    padding-left: 38px;
}
.arrow {
    width: 8px;
    margin-left: -15px;
    margin-right: 3px;
    border: 5px solid transparent;
    border-left: 8px solid #888;
    border-right: none;
}
.arrow.open {
    width: 10px;
    margin-left: -17px;
    border: 5px solid transparent;
    border-top: 8px solid #888;
    border-bottom: none;
}
.spark {
    width: 8px;
    height: 8px;
    margin-right: -4px;
    margin-bottom: 6px;
}
.insert-line {
    height: 3px;
    margin: 3px 5px 4px 7px;
    border: none;
    background-color: #60c83c;
}

/* graphics area */
.canvas {
    position: relative;
    flex: 1;
    min-width: 0;
    overflow: hidden;
}
.drawing {
    width: 100%;
}
.dim-text {
    font-family: "Liberation Mono", monospace;
    font-size: 12px;
    text-anchor: middle;
    fill: #4b2a6e;
}
.watermark {
    font-family: "Liberation Sans", sans-serif;
    font-size: 23px;
    fill: #929397;
}
.view-bar {
    position: absolute;
    top: 5px;
    left: 462px;
    display: flex;
    align-items: center;
    gap: 1px;
    height: 30px;
    padding: 0 3px;
    background-color: #f8f9fc;
    border: 1px solid #b0b3b5;
}
.view-bar button {
    position: relative;
    width: 24px;
    height: 24px;
}
.view-bar .icon {
    width: 17px;
    height: 17px;
}
.view-bar .more::after {
    content: "";
    position: absolute;
    right: 1px;
    bottom: 1px;
    border-left: 4px solid transparent;
    border-bottom: 4px solid #555;
}
```
